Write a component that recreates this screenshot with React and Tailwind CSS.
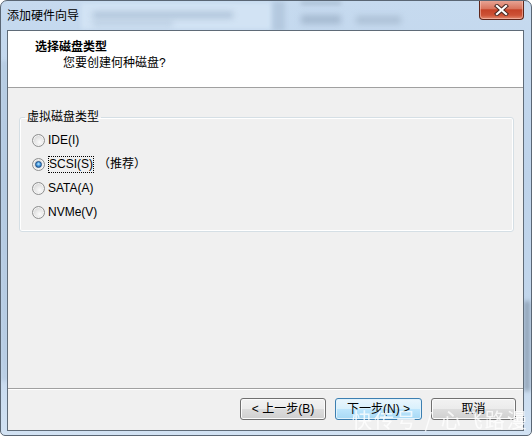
import React from "react";

const cjk = { fontFamily: '"Liberation Sans", "Noto Sans CJK SC", sans-serif' };

function Radio({ checked }) {
  return (
    <span className="flex h-[13px] w-[13px] shrink-0 items-center justify-center rounded-full border border-[#8e8f8f] bg-[radial-gradient(circle_at_60%_65%,#fbfbfb_0%,#e6e6e6_45%,#c9c9c9_100%)] shadow-[inset_0_0_0_1px_#f4f4f4]">
      {checked && (
        <span className="h-[7px] w-[7px] rounded-full border border-[#1d4f86] bg-[radial-gradient(circle_at_50%_40%,#c4ecff_0%,#4a9de0_45%,#1a5597_100%)]" />
      )}
    </span>
  );
}

function Row({ checked, children }) {
  return (
    <div className="flex h-[24px] items-center gap-[3px]">
      <Radio checked={checked} />
      {children}
    </div>
  );
}

function Button({ primary, children }) {
  return (
    <div
      className={
        "flex h-[22px] items-center justify-center rounded-[3px] border text-[12px] leading-[14px] text-black " +
        (primary
          ? "border-[#3c7fb1] bg-[linear-gradient(to_bottom,#eaf6fd_0%,#d9f0fc_50%,#bee6fd_50%,#a7d9f5_100%)] shadow-[inset_0_0_0_1px_#e0f2fc]"
          : "border-[#707070] bg-[linear-gradient(to_bottom,#f2f2f2_0%,#ebebeb_50%,#dddddd_50%,#cfcfcf_100%)] shadow-[inset_0_0_0_1px_#fbfbfb]")
      }
    >
      {children}
    </div>
  );
}

export default function App() {
  return (
    <div
      className="relative h-[436px] w-[532px] overflow-hidden rounded-t-[7px] rounded-b-[5px] border border-[#5a6674] bg-[linear-gradient(to_bottom,#c6daef_0%,#bed3ea_40%,#c3d7ec_80%,#d2e2f3_100%)]"
      style={cjk}
    >
      {/* blurred background behind glass */}
      <div className="pointer-events-none absolute left-[80px] top-[2px] h-[26px] w-[190px] bg-[#d2e3f4] blur-[2px]" />
      <div className="pointer-events-none absolute left-[92px] top-[11px] h-[6px] w-[140px] bg-[#9db3cb] opacity-70 blur-[3px]" />
      <div className="pointer-events-none absolute left-[92px] top-[20px] h-[5px] w-[80px] bg-[#a9bed4] opacity-60 blur-[3px]" />
      <div className="pointer-events-none absolute left-[272px] top-0 h-[30px] w-[12px] bg-[#b4c9df] blur-[2px]" />
      <div className="pointer-events-none absolute left-[300px] top-[0px] h-[4px] w-[40px] bg-[#9fb3c8] opacity-70 blur-[2px]" />
      <div className="pointer-events-none absolute left-[300px] top-[14px] h-[9px] w-[40px] bg-[#98adc4] opacity-70 blur-[3px]" />
      <div className="pointer-events-none absolute left-[355px] top-[15px] h-[8px] w-[45px] bg-[#a2b6cb] opacity-70 blur-[3px]" />
      <div className="pointer-events-none absolute left-[1px] top-[60px] h-[320px] w-[5px] bg-[#a9bfd8] opacity-60 blur-[2px]" />
      <div className="pointer-events-none absolute right-[1px] top-[300px] h-[90px] w-[6px] bg-[#7d8fa3] opacity-70 blur-[2px]" />

      <div className="relative flex h-full flex-col pl-[6px] pr-[7px] pb-[4px]">
        {/* title bar */}
        <div className="flex h-[29px] shrink-0 items-start">
          <div className="pt-[7px] text-[12px] leading-[16px] text-black">添加硬件向导</div>
          <div className="ml-auto -mt-[1px] mr-[0px] flex h-[20px] w-[45px] items-center justify-center rounded-b-[4px] border border-t-0 border-[#5f261a] bg-[linear-gradient(to_bottom,#e9a99a_0%,#d9755e_45%,#c54328_52%,#cd5236_80%,#e28a6f_100%)] shadow-[inset_0_0_0_1px_rgba(255,210,200,0.5)]">
            <svg width="15" height="12" viewBox="0 0 15 12">
              <path d="M3 2 L12 10 M12 2 L3 10" stroke="#4a2a24" strokeWidth="4.2" strokeLinecap="square" />
              <path d="M3 2 L12 10 M12 2 L3 10" stroke="#ffffff" strokeWidth="2.2" strokeLinecap="square" />
            </svg>
          </div>
        </div>

        {/* content */}
        <div className="flex flex-1 flex-col border border-[#5f6b78] bg-[#f0f0f0]">
          <div className="h-[57px] shrink-0 border-b border-[#a0a0a0] bg-white pl-[27px] pt-[8px]">
            <div className="text-[12px] font-bold leading-[16px] text-black">选择磁盘类型</div>
            <div className="ml-[28px] text-[12px] leading-[16px] text-black">您要创建何种磁盘?</div>
          </div>

          <div className="flex flex-1 flex-col">
            <div className="pl-[11px] pr-[9px] pt-[21px]">
              <fieldset className="rounded-[3px] border border-[#d5dfe5] px-[5px] pb-[7px] shadow-[inset_0_0_0_1px_#ffffff]">
                <legend className="px-[2px] text-[12px] leading-[16px] text-black">虚拟磁盘类型</legend>
                <div className="pl-[7px] pt-[3px] text-[12px] leading-[16px] text-black">
                  <Row>IDE(I)</Row>
                  <Row checked>
                    <span className="border border-dotted border-black px-[0px] leading-[15px]">SCSI(S)</span>
                    <span className="ml-[1px]">（推荐）</span>
                  </Row>
                  <Row>SATA(A)</Row>
                  <Row>NVMe(V)</Row>
                </div>
              </fieldset>
            </div>
            <div className="flex-1" />
            <div className="h-px bg-[#a0a0a0]" />
            <div className="h-px bg-white" />
            <div className="flex h-[40px] justify-end gap-[9px] pr-[7px] pt-[8px]">
              <div className="w-[86px]">
                <Button>&lt; 上一步(B)</Button>
              </div>
              <div className="w-[87px]">
                <Button primary>下一步(N) &gt;</Button>
              </div>
              <div className="w-[85px]">
                <Button>取消</Button>
              </div>
            </div>
          </div>
        </div>
      </div>

      {/* watermark */}
      <div
        className="pointer-events-none absolute left-[351px] top-[407px] whitespace-nowrap text-[20px] leading-[24px] tracking-[2px] text-white opacity-80"
        style={{ fontFamily: '"Noto Sans CJK SC", sans-serif' }}
      >
        快传号 / 心飞路漫
      </div>
    </div>
  );
}
